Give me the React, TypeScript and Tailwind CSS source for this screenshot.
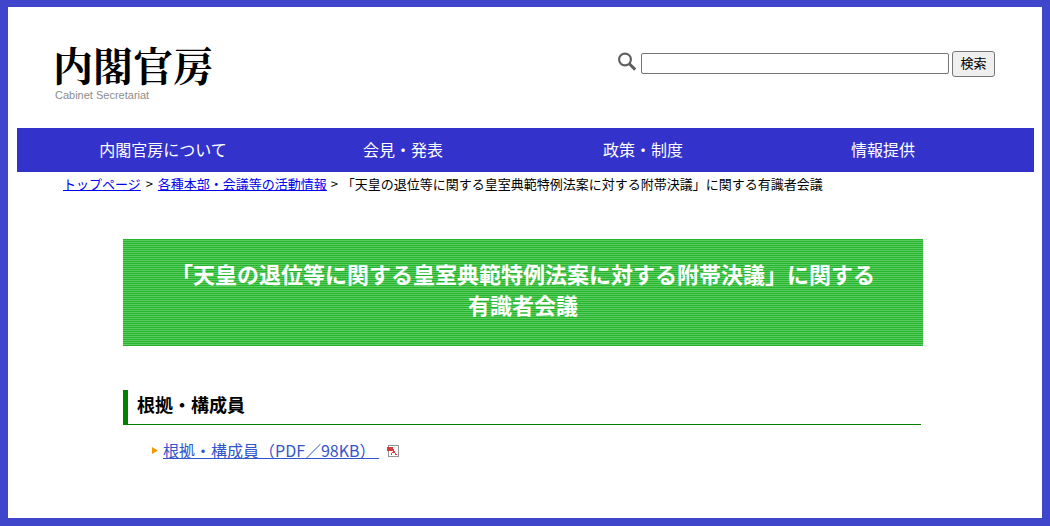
import { FormEvent } from "react";

const navItems = ["内閣官房について", "会見・発表", "政策・制度", "情報提供"];

function SearchIcon() {
  return (
    <svg className="h-5 w-5 shrink-0" viewBox="0 0 20 20" fill="none" stroke="#5f5f5f" aria-hidden="true">
      <circle cx="8" cy="7.5" r="5.9" strokeWidth="2.1" />
      <path d="M12.3 11.8 18.2 17.6" strokeWidth="3" />
    </svg>
  );
}

function PdfIcon() {
  return (
    <svg className="h-3 w-3" viewBox="0 0 12 12" shapeRendering="crispEdges" role="img" aria-label="PDF">
      <path d="M1.5.5h10v11h-10z" fill="#fff" stroke="#959595" />
      <path d="M0 2h6v4H0z" fill="#d83b3b" />
      <path
        d="M6 4h1v2H6zM6 6h1v1H6zM7 6h1v2H7zM5 7h1v1H5zM4 8h1v2H4zM6 7h1v1H6zM8 8h1v1H8zM8 9h2v1H8z"
        fill="#d83b3b"
      />
    </svg>
  );
}

export default function App() {
  function handleSearch(e: FormEvent) {
    e.preventDefault();
  }

  return (
    <div className="min-h-screen border-8 border-t-[7px] border-[#4046cc] bg-white pr-2 pl-[9px] font-['Noto_Sans_CJK_JP',sans-serif] text-black">
      <header className="flex h-[121px] items-start justify-between pr-[39px] pl-9">
        <a href="#top" className="block pt-[34px]">
          <span className="block font-['Noto_Serif_CJK_JP','Noto_Sans_CJK_JP',serif] text-[40px] leading-[46px] font-bold">
            内閣官房
          </span>
          <span className="block pt-0.5 pl-0.5 font-['Liberation_Sans',sans-serif] text-[11px] leading-3 text-[#8c8c8c]">
            Cabinet Secretariat
          </span>
        </a>
        <form onSubmit={handleSearch} className="flex items-center pt-11">
          <label htmlFor="q" className="mr-1 mb-1" aria-label="サイト内検索">
            <SearchIcon />
          </label>
          <input
            id="q"
            type="text"
            className="mb-px h-[21px] w-[308px] rounded-[2px] border border-[#767676] bg-white px-1 text-[13px]"
          />
          <button
            type="submit"
            className="ml-[3px] h-[26px] w-[43px] rounded-[3px] border border-[#767676] bg-[#efefef] pb-0.5 text-[13px] leading-5"
          >
            検索
          </button>
        </form>
      </header>

      <nav className="bg-[#3333cc] pr-[31px] pl-[26px]">
        <ul className="grid grid-cols-4">
          {navItems.map((item) => (
            <li key={item} className="text-center">
              <a href="#" className="block pb-0.5 text-base leading-[42px] text-white">
                {item}
              </a>
            </li>
          ))}
        </ul>
      </nav>

      <p className="pl-[46px] text-[13px] leading-6">
        <a href="#" className="text-[#0000ee] underline">トップページ</a>
        <span className="mx-0.5">{" > "}</span>
        <a href="#" className="text-[#0000ee] underline">各種本部・会議等の活動情報</a>
        <span className="mx-px">{" > "}</span>
        「天皇の退位等に関する皇室典範特例法案に対する附帯決議」に関する有識者会議
      </p>

      <main className="mx-auto mt-[43px] w-full max-w-[805px] pr-[5px]">
        <h1 className="bg-[repeating-linear-gradient(to_bottom,#26b62e_0px,#26b62e_1px,#5ccb62_1px,#5ccb62_2px)] px-10 pt-[19px] pb-[26px] text-center text-[22px] leading-[31px] font-bold text-white">
          「天皇の退位等に関する皇室典範特例法案に対する附帯決議」に関する有識者会議
        </h1>

        <section className="mt-11 mr-0.5">
          <h2 className="border-b border-l-[5px] border-b-[#008000] border-l-[#008000] pb-1.5 pl-[9px] text-[18px] leading-7 font-bold">
            根拠・構成員
          </h2>
          <ul className="mt-[11px] pl-[29px]">
            <li className="flex items-center">
              <svg className="mr-[5px] h-[7px] w-1.5" viewBox="0 0 6 7" fill="#f59a00" aria-hidden="true">
                <path d="M0 0 6 3.5 0 7z" />
              </svg>
              <a href="#" className="text-base leading-7 whitespace-pre text-[#3355cc] underline">
                {"根拠・構成員（PDF／98KB） "}
              </a>
              <span className="ml-2 pt-0.5">
                <PdfIcon />
              </span>
            </li>
          </ul>
        </section>
      </main>
    </div>
  );
}
